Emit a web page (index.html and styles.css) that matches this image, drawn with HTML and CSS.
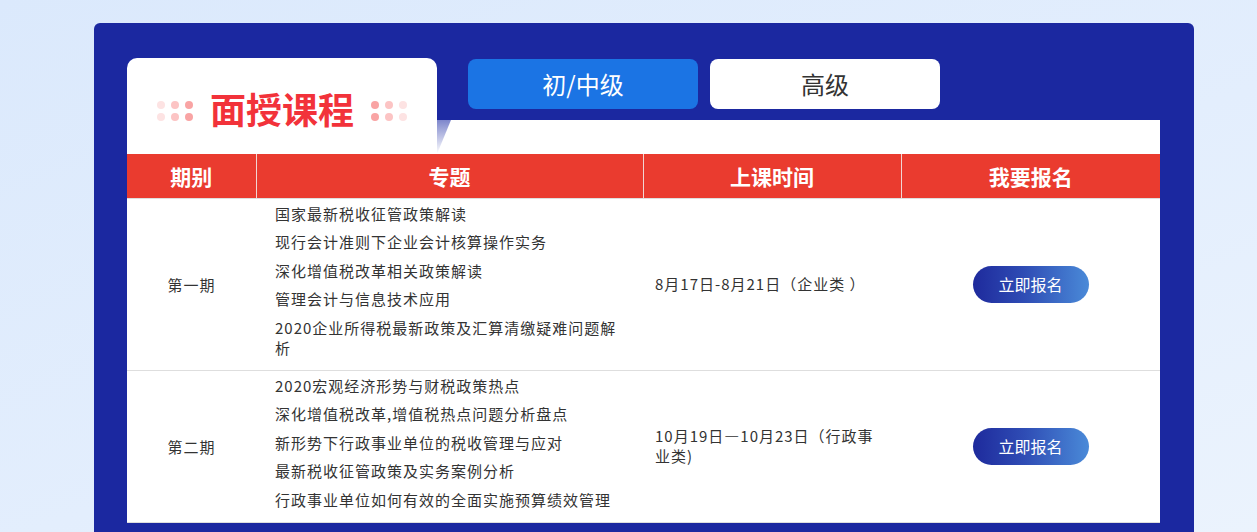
FILE: index.html
```html
<!DOCTYPE html>
<html lang="zh-CN">
<head>
<meta charset="utf-8">
<title>面授课程</title>
<link rel="stylesheet" href="styles.css">
</head>
<body>
<div class="page">
  <section class="panel">
    <div class="tabs">
      <div class="title-card">
        <span class="dots dots-left"><i></i><i></i><i></i><i></i><i></i><i></i></span>
        <h2 class="title">面授课程</h2>
        <span class="dots dots-right"><i></i><i></i><i></i><i></i><i></i><i></i></span>
      </div>
      <button class="tab tab-active">初/中级</button>
      <button class="tab">高级</button>
    </div>
    <div class="sheet">
      <svg class="wedge" width="16" height="34" viewBox="0 0 16 34">
        <defs>
          <linearGradient id="wg" x1="0" y1="0" x2="0" y2="1">
            <stop offset="0" stop-color="#7d86cc"/>
            <stop offset="1" stop-color="#ffffff"/>
          </linearGradient>
        </defs>
        <polygon points="0,0 14,0 0,34" fill="url(#wg)"/>
      </svg>
      <table class="course-table">
        <colgroup>
          <col class="c1"><col class="c2"><col class="c3"><col class="c4">
        </colgroup>
        <thead>
          <tr><th>期别</th><th>专题</th><th>上课时间</th><th>我要报名</th></tr>
        </thead>
        <tbody>
          <tr>
            <td class="period">第一期</td>
            <td class="topics">
              <ul>
                <li>国家最新税收征管政策解读</li>
                <li>现行会计准则下企业会计核算操作实务</li>
                <li>深化增值税改革相关政策解读</li>
                <li>管理会计与信息技术应用</li>
                <li>2020企业所得税最新政策及汇算清缴疑难问题解析</li>
              </ul>
            </td>
            <td class="date">8月17日-8月21日（企业类 ）</td>
            <td class="action"><a class="signup" href="#">立即报名</a></td>
          </tr>
          <tr>
            <td class="period">第二期</td>
            <td class="topics">
              <ul>
                <li>2020宏观经济形势与财税政策热点</li>
                <li>深化增值税改革,增值税热点问题分析盘点</li>
                <li>新形势下行政事业单位的税收管理与应对</li>
                <li>最新税收征管政策及实务案例分析</li>
                <li>行政事业单位如何有效的全面实施预算绩效管理</li>
              </ul>
            </td>
            <td class="date">10月19日—10月23日（行政事业类)</td>
            <td class="action"><a class="signup" href="#">立即报名</a></td>
          </tr>
        </tbody>
      </table>
    </div>
  </section>
</div>
</body>
</html>
```

FILE: styles.css
```css
* { box-sizing: border-box; }
html, body { margin: 0; padding: 0; }
body {
  font-family: "Noto Sans CJK SC", "Noto Sans", sans-serif;
  background: linear-gradient(160deg, #dbe9fc 0%, #e3eefd 55%, #ebf3fd 100%);
  height: 532px;
  overflow: hidden;
}
.page { padding: 23px 0 0 94px; }
.panel {
  width: 1100px;
  background: #1b28a0;
  border-radius: 6px 6px 0 0;
  padding: 35px 34px 11px 33px;
}
.tabs {
  display: flex;
  align-items: flex-start;
  height: 62px;
}
.title-card {
  position: relative;
  z-index: 1;
  width: 310px;
  height: 96px;
  background: #fff;
  border-radius: 10px 10px 0 0;
  display: flex;
  align-items: flex-start;
  justify-content: center;
  padding-top: 33px;
  gap: 17px;
}
.title {
  margin: -3px 0 0;
  font-size: 36px;
  line-height: 40px;
  font-weight: 700;
  color: #f2323a;
}
.dots {
  display: grid;
  grid-template-columns: repeat(3, 8px);
  grid-auto-rows: 8px;
  column-gap: 6px;
  row-gap: 4px;
  margin-top: 10px;
}
.dots i { display: block; width: 8px; height: 8px; border-radius: 50%; }
.dots-left i:nth-child(3n+1) { background: #fde3e3; }
.dots-left i:nth-child(3n+2) { background: #fcc4c4; }
.dots-left i:nth-child(3n)   { background: #f9a4a4; }
.dots-right i:nth-child(3n+1) { background: #f9a4a4; }
.dots-right i:nth-child(3n+2) { background: #fcc4c4; }
.dots-right i:nth-child(3n)   { background: #fde3e3; }
.tab {
  margin-top: 1px;
  width: 230px;
  height: 50px;
  border: 0;
  border-radius: 8px;
  background: #fff;
  color: #333;
  font-family: inherit;
  font-size: 24px;
  line-height: 50px;
  padding: 0;
  margin-right: 12px;
}
.tab-active {
  margin-left: 31px;
  background: #1b74e4;
  color: #fff;
}
.sheet {
  position: relative;
  background: #fff;
  padding-top: 34px;
}
.wedge {
  position: absolute;
  left: 310px;
  top: 0;
  z-index: 2;
}
.course-table {
  width: 1033px;
  border-collapse: collapse;
  table-layout: fixed;
}
.c1 { width: 129px; }
.c2 { width: 387px; }
.c3 { width: 258px; }
.c4 { width: 259px; }
.course-table th {
  height: 44px;
  background: #ea3b2f;
  color: #fff;
  font-size: 21px;
  font-weight: 700;
  border-left: 1px solid #f1d6d3;
  border-bottom: 1px solid #dedede;
  padding: 0;
}
.course-table th:first-child { border-left: 0; }
.course-table td {
  border-bottom: 1px solid #dedede;
  font-size: 15px;
  letter-spacing: 1px;
  color: #333;
  vertical-align: middle;
  padding: 0;
}
.period { text-align: center; }
.topics ul {
  list-style: none;
  margin: 0;
  padding: 1px 20px 7.5px 19px;
}
.topics li {
  line-height: 20px;
  padding: 4.25px 0;
}
.date {
  padding: 0 20px 0 12px !important;
  line-height: 20px;
}
.action { text-align: center; letter-spacing: 0 !important; }
.signup {
  display: inline-block;
  width: 116px;
  height: 37px;
  line-height: 37px;
  border-radius: 19px;
  background: linear-gradient(90deg, #1e2a9c 0%, #2f4db5 45%, #4a8ad8 100%);
  color: #fff;
  font-size: 16px;
  text-decoration: none;
}
```
